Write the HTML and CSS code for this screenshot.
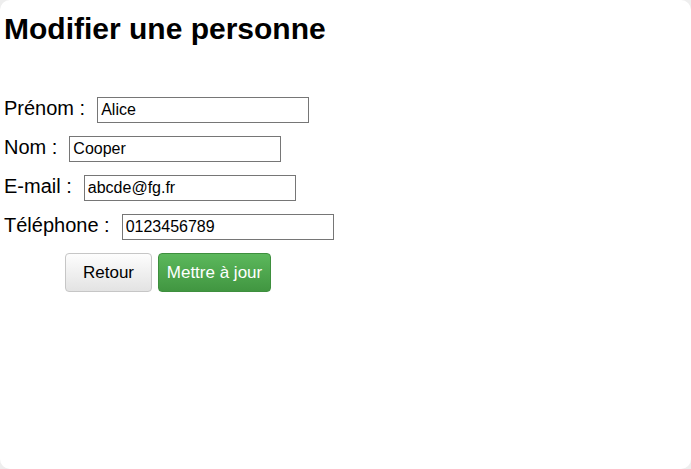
FILE: index.html
```html
<!DOCTYPE html>
<html lang="fr">
<head>
<meta charset="utf-8">
<title>Modifier une personne</title>
<link rel="stylesheet" href="styles.css">
</head>
<body>
<div class="page">
  <h1 class="title">Modifier une personne</h1>
  <form class="form">
    <div class="row"><label class="label" for="prenom">Prénom :</label><input class="field" id="prenom" type="text" value="Alice"></div>
    <div class="row"><label class="label" for="nom">Nom :</label><input class="field" id="nom" type="text" value="Cooper"></div>
    <div class="row"><label class="label" for="email">E-mail :</label><input class="field" id="email" type="text" value="abcde@fg.fr"></div>
    <div class="row"><label class="label" for="tel">Téléphone :</label><input class="field" id="tel" type="text" value="0123456789"></div>
    <div class="actions">
      <button type="button" class="btn btn-default">Retour</button>
      <button type="button" class="btn btn-success">Mettre à jour</button>
    </div>
  </form>
</div>
</body>
</html>
```
FILE: styles.css
```css
html {
  background: #eeeeee;
}
body {
  margin: 0;
  font-family: "Liberation Sans", Arial, sans-serif;
  color: #000;
}
.page {
  background: #fff;
  min-height: 100vh;
  box-sizing: border-box;
  border-radius: 10px;
  padding: 1px 4px;
}
.title {
  font-size: 30px;
  font-weight: bold;
  margin: 10px 0 0;
  line-height: 36px;
}
.form {
  margin-top: 50px;
  display: flex;
  flex-direction: column;
  gap: 13px;
}
.row {
  display: flex;
  align-items: baseline;
  gap: 12px;
}
.label {
  font-size: 20px;
  line-height: 20px;
}
.field {
  width: 212px;
  height: 26px;
  box-sizing: border-box;
  border: 1px solid #767676;
  padding: 0 3px;
  margin: 0;
  font-family: "Liberation Sans", Arial, sans-serif;
  font-size: 16px;
  color: #000;
  border-radius: 0;
}
.actions {
  display: flex;
  gap: 6px;
  padding-left: 61px;
}
.btn {
  height: 39px;
  box-sizing: border-box;
  font-family: "Liberation Sans", Arial, sans-serif;
  font-size: 17px;
  border-radius: 4px;
  padding: 0 6px;
  margin: 0;
  cursor: pointer;
}
.btn-default {
  width: 87px;
  color: #000;
  background: linear-gradient(#fdfdfd, #e3e3e3);
  border: 1px solid #c6c6c6;
}
.btn-success {
  width: 113px;
  color: #fff;
  background: linear-gradient(#5cb85c, #419641);
  border: 1px solid #3e8f3e;
}
```
